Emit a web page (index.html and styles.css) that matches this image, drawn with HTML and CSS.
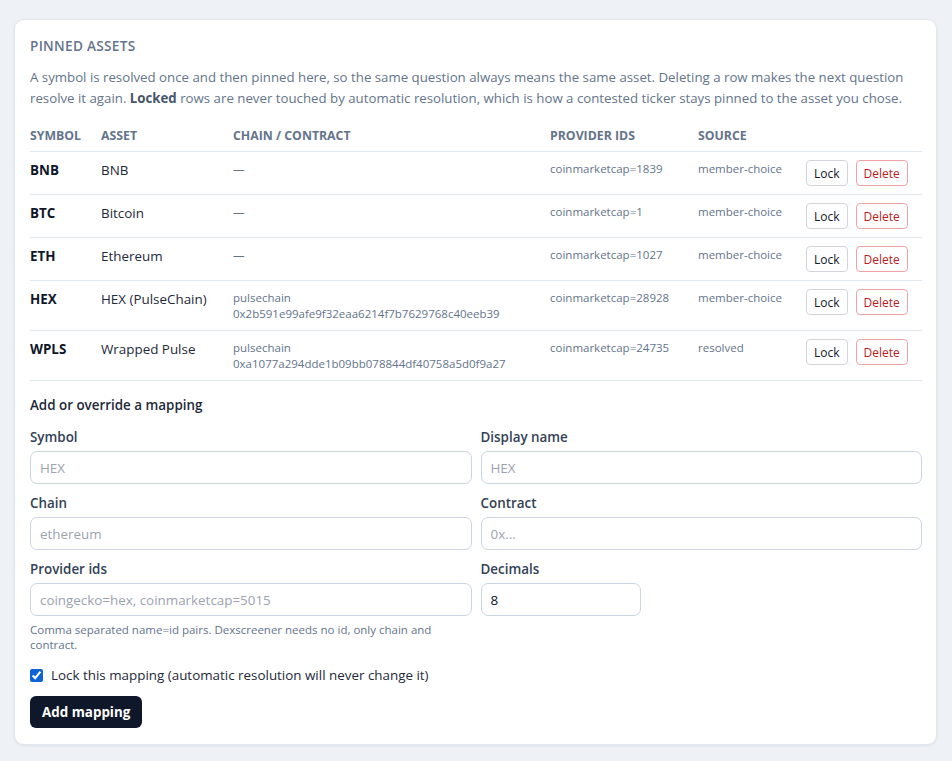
FILE: index.html
```html
<!DOCTYPE html>
<html lang="en">
<head>
  <meta charset="UTF-8">
  <meta name="viewport" content="width=device-width, initial-scale=1.0">
  <title>Pinned Assets</title>
  <link rel="stylesheet" href="styles.css">
</head>
<body>

  <div class="pinned-card">
    <h2 class="pinned-title">Pinned Assets</h2>
    <p class="pinned-intro">A symbol is resolved once and then pinned here, so the same question always means the same asset. Deleting a row makes the next question resolve it again. <strong class="locked-word">Locked</strong> rows are never touched by automatic resolution, which is how a contested ticker stays pinned to the asset you chose.</p>

    <table class="pinned-table">
      <colgroup>
        <col style="width:71px">
        <col style="width:132px">
        <col style="width:317px">
        <col style="width:148px">
        <col style="width:108px">
        <col>
      </colgroup>
      <thead>
        <tr>
          <th>Symbol</th>
          <th>Asset</th>
          <th>Chain / Contract</th>
          <th>Provider IDs</th>
          <th>Source</th>
          <th></th>
        </tr>
      </thead>
      <tbody>
        <tr>
          <td class="sym">BNB</td>
          <td>BNB</td>
          <td class="small">—</td>
          <td class="small">coinmarketcap=1839</td>
          <td class="small">member-choice</td>
          <td class="actions"><button class="btn-lock">Lock</button><button class="btn-delete">Delete</button></td>
        </tr>
        <tr>
          <td class="sym">BTC</td>
          <td>Bitcoin</td>
          <td class="small">—</td>
          <td class="small">coinmarketcap=1</td>
          <td class="small">member-choice</td>
          <td class="actions"><button class="btn-lock">Lock</button><button class="btn-delete">Delete</button></td>
        </tr>
        <tr>
          <td class="sym">ETH</td>
          <td>Ethereum</td>
          <td class="small">—</td>
          <td class="small">coinmarketcap=1027</td>
          <td class="small">member-choice</td>
          <td class="actions"><button class="btn-lock">Lock</button><button class="btn-delete">Delete</button></td>
        </tr>
        <tr>
          <td class="sym">HEX</td>
          <td>HEX (PulseChain)</td>
          <td class="small">pulsechain<br>0x2b591e99afe9f32eaa6214f7b7629768c40eeb39</td>
          <td class="small">coinmarketcap=28928</td>
          <td class="small">member-choice</td>
          <td class="actions"><button class="btn-lock">Lock</button><button class="btn-delete">Delete</button></td>
        </tr>
        <tr>
          <td class="sym">WPLS</td>
          <td>Wrapped Pulse</td>
          <td class="small">pulsechain<br>0xa1077a294dde1b09bb078844df40758a5d0f9a27</td>
          <td class="small">coinmarketcap=24735</td>
          <td class="small">resolved</td>
          <td class="actions"><button class="btn-lock">Lock</button><button class="btn-delete">Delete</button></td>
        </tr>
      </tbody>
    </table>

    <h3 class="mapping-title">Add or override a mapping</h3>

    <form class="mapping-form" action="javascript:void(0);">
      <div class="field">
        <label for="symbol">Symbol</label>
        <input type="text" id="symbol" placeholder="HEX">
      </div>
      <div class="field">
        <label for="display-name">Display name</label>
        <input type="text" id="display-name" placeholder="HEX">
      </div>
      <div class="field">
        <label for="chain">Chain</label>
        <input type="text" id="chain" placeholder="ethereum">
      </div>
      <div class="field">
        <label for="contract">Contract</label>
        <input type="text" id="contract" placeholder="0x...">
      </div>
      <div class="field">
        <label for="provider-ids">Provider ids</label>
        <input type="text" id="provider-ids" placeholder="coingecko=hex, coinmarketcap=5015">
        <div class="field-help">Comma separated name=id pairs. Dexscreener needs no id, only chain and contract.</div>
      </div>
      <div class="field">
        <label for="decimals">Decimals</label>
        <input type="text" id="decimals" class="input-short" value="8">
      </div>

      <label class="lock-check"><input type="checkbox" checked> Lock this mapping (automatic resolution will never change it)</label>

      <div class="form-actions">
        <button type="submit" class="btn-primary">Add mapping</button>
      </div>
    </form>
  </div>

</body>
</html>
```

FILE: styles.css
```css
body {
  background-color: #eef2f7;
  font-family: "Open Sans", "Noto Sans", Arial, sans-serif;
  margin: 0;
  padding: 19px 15px 16px 14px;
  color: #0f172a;
}
.pinned-card {
  background-color: #fff;
  border: 1px solid #e2e8f0;
  border-radius: 10px;
  box-shadow: 0 1px 3px rgba(15, 23, 42, 0.08);
  padding: 16px 15px 16px 15px;
}
.pinned-title {
  margin: 0;
  padding-top: 1px;
  font-size: 13.6px;
  font-weight: 600;
  letter-spacing: 0.3px;
  text-transform: uppercase;
  color: #64748b;
  line-height: 18px;
}
.pinned-intro {
  margin: 12px 0 14px;
  font-size: 13.25px;
  line-height: 21px;
  color: #64748b;
}
.locked-word {
  color: #475569;
  font-weight: 700;
}
.pinned-table {
  width: 892px;
  border-collapse: collapse;
  table-layout: fixed;
}
.pinned-table th {
  text-align: left;
  font-size: 12.3px;
  font-weight: 700;
  color: #64748b;
  text-transform: uppercase;
  padding: 5px 0 7px;
  border-bottom: 1px solid #e2e8f0;
  line-height: 16px;
}
.pinned-table td {
  vertical-align: top;
  padding: 8px 0 8px;
  border-bottom: 1px solid #e2e8f0;
  font-size: 13.4px;
  line-height: 20px;
  color: #1e293b;
}
.pinned-table td.sym {
  font-weight: 700;
  color: #0f172a;
}
.pinned-table td.small {
  font-size: 11.5px;
  line-height: 16px;
  color: #64748b;
  padding-top: 9px;
}
.pinned-table td.actions {
  white-space: nowrap;
}
.btn-lock, .btn-delete {
  font-family: inherit;
  font-size: 12px;
  height: 26px;
  padding: 0 7px;
  border-radius: 4px;
  background: #fff;
  cursor: pointer;
  margin-right: 8px;
}
.btn-lock {
  border: 1px solid #d1d5db;
  color: #111827;
}
.btn-delete {
  border: 1px solid #f0a3a3;
  color: #b91c1c;
}
.mapping-title {
  margin: 15px 0 0;
  font-size: 13.4px;
  font-weight: 600;
  color: #1e293b;
  line-height: 18px;
}
.mapping-form {
  display: grid;
  grid-template-columns: 1fr 1fr;
  column-gap: 9px;
  row-gap: 10px;
  width: 892px;
  margin-top: 14px;
}
.field label {
  display: block;
  font-size: 13.4px;
  font-weight: 600;
  color: #334155;
  line-height: 18px;
  margin-bottom: 5px;
}
.field input {
  width: 100%;
  box-sizing: border-box;
  height: 33px;
  padding: 0 9px;
  border: 1px solid #cbd5e1;
  border-radius: 7px;
  font-family: inherit;
  font-size: 13.4px;
  color: #0f172a;
  background: #fff;
}
.field input::placeholder {
  color: #9ca3af;
}
.field input.input-short {
  width: 160px;
}
.field-help {
  margin-top: 6px;
  font-size: 11.5px;
  line-height: 15px;
  color: #64748b;
  padding-right: 16px;
}
.lock-check {
  grid-column: 1 / 3;
  display: flex;
  align-items: center;
  gap: 8px;
  margin-top: 4px;
  font-size: 13.4px;
  color: #1e293b;
}
.lock-check input {
  margin: 0;
  width: 13px;
  height: 13px;
  accent-color: #0b63d6;
}
.form-actions {
  grid-column: 1 / 3;
  margin-top: 2px;
}
.btn-primary {
  background-color: #0f172a;
  color: #fff;
  border: none;
  border-radius: 6px;
  height: 32px;
  padding: 0 12px;
  font-family: inherit;
  font-size: 13.4px;
  font-weight: 700;
  cursor: pointer;
}
```
